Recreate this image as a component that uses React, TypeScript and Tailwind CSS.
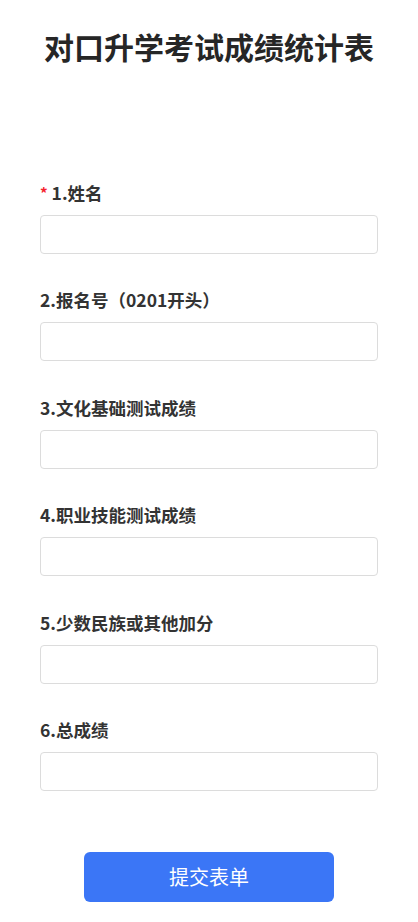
const fields = [
  { label: '1.姓名', required: true },
  { label: '2.报名号（0201开头）' },
  { label: '3.文化基础测试成绩' },
  { label: '4.职业技能测试成绩' },
  { label: '5.少数民族或其他加分' },
  { label: '6.总成绩' },
];

export default function App() {
  return (
    <div
      className="min-h-screen bg-white text-[#333]"
      style={{ fontFamily: '"Noto Sans CJK SC", "Noto Sans", sans-serif' }}
    >
      <h1 className="pt-[26px] text-center text-[30px] font-bold leading-[40px] text-[#262626]">
        对口升学考试成绩统计表
      </h1>

      <form className="px-10 pt-[115px]">
        {fields.map((f) => (
          <div key={f.label} className="mb-[34.4px]">
            <div className="flex h-6 items-center text-[17.5px] font-bold leading-6">
              {f.required && <span className="mr-1 text-[15px] text-[#f5222d]">*</span>}
              {f.label}
            </div>
            <input
              type="text"
              className="mt-[10px] block h-[39px] w-full rounded border border-[#dcdcdc] bg-white px-3 outline-none"
            />
          </div>
        ))}

        <div className="flex justify-center pt-[27px]">
          <button
            type="button"
            className="h-[50px] w-[250px] rounded-md bg-[#3b76f6] text-[20px] text-white"
          >
            提交表单
          </button>
        </div>
      </form>
    </div>
  );
}
